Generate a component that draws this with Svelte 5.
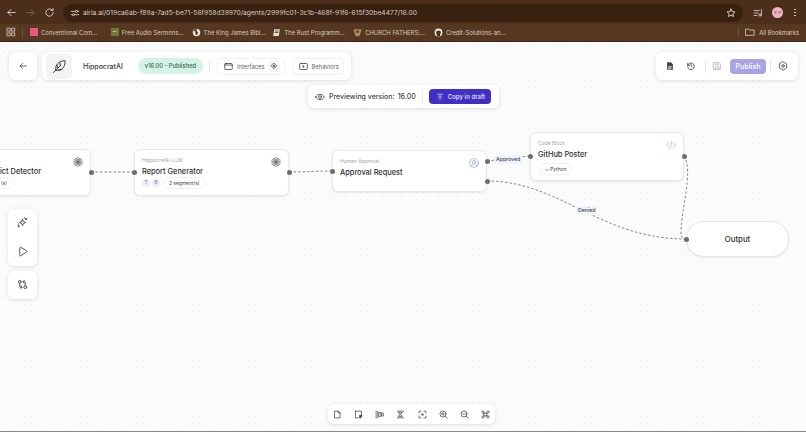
<script>
  const bookmarks = [
    { label: "Conventional Com...", kind: "pink" },
    { label: "Free Audio Sermons...", kind: "olive" },
    { label: "The King James Bibl...", kind: "globe" },
    { label: "The Rust Programm...", kind: "book" },
    { label: "CHURCH FATHERS:...", kind: "church" },
    { label: "Credit-Solutions-an...", kind: "github" }
  ];

  const nodes = [
    { id: "detector", cls: "cut", left: -27, top: 107, width: 118, height: 47, kicker: "", title: "Conflict Detector", icon: "llm", chip: "(s)" },
    { id: "report", left: 134, top: 107, width: 155, height: 47, kicker: "HippocratAI-LLM", title: "Report Generator", icon: "llm", tags: ["T", "B"], chip: "2 segment(s)" },
    { id: "approval", left: 332, top: 108, width: 155, height: 42, kicker: "Human Approval", title: "Approval Request", icon: "human" },
    { id: "github", cls: "tall", left: 530, top: 90, width: 154, height: 49, kicker: "Code Block", title: "GitHub Poster", icon: "code", chip: "‹› Python" }
  ];

  const ports = [
    [91, 130], [134, 130], [289, 130], [332, 129], [487, 119], [487, 139], [530, 114], [684, 114], [686, 197]
  ];

  const edges = [
    "M91 130 L134 130",
    "M289 130 C310 130 310 129 332 129",
    "M487 119 L530 114",
    "M487 139 C560 139 600 197 686 197",
    "M684 114 C694 130 680 170 681 194 L686 197"
  ];

  const petals = [0, 60, 120, 180, 240, 300];
</script>

<div class="window">
  <header class="chrome">
    <div class="toolbar">
      <div class="nav">
        <svg viewBox="0 0 12 12"><path d="M10 6H2M5.500 2.500 2 6l3.500 3.500" /></svg>
        <svg class="off" viewBox="0 0 12 12"><path d="M2 6h8M6.500 2.500 10 6l-3.500 3.500" /></svg>
        <svg viewBox="0 0 12 12"><path d="M10 6a4 4 0 1 1-1.200-2.800M10 1.500v2.200H7.800" /></svg>
      </div>
      <div class="url">
        <svg viewBox="0 0 12 12"><path d="M1.500 4h5M9 4h1.500M1.500 8H3M5.500 8h5" /><circle cx="7.800" cy="4" r="1.300" /><circle cx="4.200" cy="8" r="1.300" /></svg>
        <span class="address">airia.ai/019ca6ab-f89a-7ad5-be71-56f958d39970/agents/2999fc01-3c1b-468f-91f6-615f30be4477/16.00</span>
        <svg class="star" viewBox="0 0 12 12"><path d="m6 1.300 1.400 3 3.300.4-2.400 2.200.6 3.300L6 8.600l-2.900 1.600.6-3.300-2.400-2.200 3.300-.4z" /></svg>
      </div>
      <div class="chrome-end">
        <svg viewBox="0 0 12 12"><path d="M1.500 3h6M1.500 6h5M1.500 9h3M10 2v6.500" /><circle cx="8.500" cy="8.500" r="1.300" /></svg>
        <span class="avatar">K P</span>
        <span class="kebab"><i></i><i></i><i></i></span>
      </div>
    </div>
    <div class="bookmarks">
      <svg class="apps" viewBox="0 0 12 12"><rect x="1.500" y="1.500" width="3.500" height="3.500" /><rect x="7" y="1.500" width="3.500" height="3.500" /><rect x="1.500" y="7" width="3.500" height="3.500" /><rect x="7" y="7" width="3.500" height="3.500" /></svg>
      <span class="divider"></span>
      {#each bookmarks as mark}
        <span class="mark">
          {#if mark.kind === "pink"}
            <i class="fav pink"></i>
          {:else if mark.kind === "olive"}
            <i class="fav olive">–</i>
          {:else if mark.kind === "globe"}
            <svg class="fav-svg" viewBox="0 0 12 12"><circle cx="6" cy="6" r="5" fill="#e4e0dc" /><path d="M2 3.500 5 5 4.500 8 6.500 9.500 8 6 6 3.500 7 1.500 4 1.500z" fill="#4a2f1d" /></svg>
          {:else if mark.kind === "book"}
            <svg class="fav-svg" viewBox="0 0 12 12"><path d="M3 1.500h7.500L9 10.500H1.500z" fill="#e4e0dc" /><path d="M4.500 4h4M4 6h4" stroke="#4a2f1d" /></svg>
          {:else if mark.kind === "church"}
            <svg class="fav-svg" viewBox="0 0 12 12"><path d="M1 1.500h10v2L8.500 11h-5L1 3.500z" fill="#b08a58" /><circle cx="6" cy="4.500" r="2" fill="#6a4020" /></svg>
          {:else}
            <svg class="fav-svg" viewBox="0 0 12 12"><circle cx="6" cy="6" r="5.200" fill="#ece8e4" /><path d="M4 11V8.800L3 7.500V5l1-1.200h4L9 5v2.500L8 8.800V11z" fill="#4a2f1d" /></svg>
          {/if}
          {mark.label}
        </span>
      {/each}
      <span class="spacer"></span>
      <span class="divider"></span>
      <span class="all">
        <svg viewBox="0 0 12 12"><path d="M1 2.500h3.500l1 1.200H11V10H1z" /></svg>
        All Bookmarks
      </span>
    </div>
  </header>

  <main class="canvas">
    <svg class="wires" viewBox="0 0 806 390">
      {#each edges as d}
        <path {d} />
      {/each}
    </svg>

    {#each nodes as node (node.id)}
      <article class="node {node.cls ?? ''}" style="left:{node.left}px;top:{node.top}px;width:{node.width}px;height:{node.height}px">
        {#if node.kicker}<p class="kicker">{node.kicker}</p>{/if}
        <h3 class:low={!node.kicker}>{node.title}</h3>
        {#if node.chip}
          <div class="meta">
            {#each node.tags ?? [] as tag}<span class="tag">{tag}</span>{/each}
            <span class="chip">{node.chip}</span>
          </div>
        {/if}
        {#if node.icon === "llm"}
          <svg class="node-icon" viewBox="0 0 12 12">
            {#each petals as turn}
              <ellipse cx="6" cy="3.500" rx="2.500" ry="3" transform="rotate({turn} 6 6)" />
            {/each}
          </svg>
        {:else if node.icon === "human"}
          <svg class="node-icon human" viewBox="0 0 12 12">
            <circle cx="6" cy="6" r="5.200" />
            <circle cx="6" cy="4.600" r="1.800" />
            <path d="M3 9.800c.5-2 1.500-2.900 3-2.900s2.500.9 3 2.900" />
          </svg>
        {:else}
          <svg class="node-icon code" viewBox="0 0 12 12"><path d="M3.500 3 .8 6l2.700 3M8.500 3l2.700 3-2.700 3M7 1.800 5 10.200" /></svg>
        {/if}
      </article>
    {/each}

    <article class="output">Output</article>

    {#each ports as [x, y]}
      <span class="port" style="left:{x}px;top:{y}px"></span>
    {/each}
    <span class="edge-label approved">Approved</span>
    <span class="edge-label denied">Denied</span>

    <div class="topbar">
      <button class="card back" aria-label="Back">
        <svg viewBox="0 0 12 12"><path d="M10 6H2.500M5.500 3 2.500 6l3 3" /></svg>
      </button>
      <div class="card agent">
        <span class="agent-icon">
          <svg viewBox="0 0 16 16"><path d="M1.500 14.500 9.500 6.500M4 12C3 7 6.500 2 14 1.800 14.200 9 10 13.500 4 12zM5.500 6.500 5.800 9.800M8.500 4 8.800 7.200M7 11.500l3.500-.3" /></svg>
        </span>
        <span class="agent-name">HippocratAI</span>
        <span class="version">v16.00 - Published</span>
        <span class="divider light"></span>
        <span class="pill">
          <svg viewBox="0 0 12 12"><rect x="1" y="2" width="10" height="8" rx="1" /><path d="M1 4h10" /></svg>
          Interfaces
          <span class="diamond"><svg viewBox="0 0 12 12"><path d="M6 2 10 6 6 10 2 6z" /><path class="fill" d="M6 4.200 7.800 6 6 7.800 4.200 6z" /></svg></span>
        </span>
        <span class="pill">
          <svg viewBox="0 0 12 12"><rect x="1" y="2" width="10" height="8" rx="1" /><path class="fill" d="M5 4l2.500 2L5 8z" /></svg>
          Behaviors
        </span>
      </div>
      <span class="spacer"></span>
      <div class="card actions">
        <svg viewBox="0 0 12 12"><path class="fill" d="M2.500 1.500h4.500l2.500 2.500v6.500h-7z" /><path class="cut" d="M4 7h4M4 8.800h3" /></svg>
        <svg viewBox="0 0 12 12"><path d="M2 3v2.200h2.200M2.200 5A4 4 0 1 1 2 7M6 3.800V6l1.600 1" /></svg>
        <span class="divider light"></span>
        <svg class="dim" viewBox="0 0 12 12"><path d="M2 2h6.500L10 3.500V10H2zM4 2v2.500h3.500V2M4 10V7h4v3" /></svg>
        <span class="publish">Publish</span>
        <span class="divider light"></span>
        <svg viewBox="0 0 12 12"><path d="M6 1 10.300 3.500v5L6 11 1.700 8.500v-5z" /><circle cx="6" cy="6" r="1.600" /></svg>
      </div>
    </div>

    <div class="preview-row">
      <div class="card preview">
        <svg viewBox="0 0 12 12"><path d="M.8 6C2 3.800 3.800 2.700 6 2.700S10 3.800 11.200 6C10 8.200 8.200 9.300 6 9.300S2 8.200.8 6z" /><circle cx="6" cy="6" r="1.700" /></svg>
        <span class="preview-text">Previewing version:</span>
        <span class="preview-text">16.00</span>
        <span class="divider light"></span>
        <button class="copy">
          <svg viewBox="0 0 12 12"><path d="M2 1.800h8M6 10.500V4M3.300 6.500 6 3.800l2.700 2.700" /></svg>
          Copy in draft
        </button>
      </div>
    </div>

    <aside class="side">
      <div class="card side-group">
        <svg viewBox="0 0 12 12"><path d="M6 2.500 7 5l2.500 1L7 7 6 9.500 5 7 2.500 6 5 5z" /><circle class="fill" cx="10" cy="2.200" r="1.100" /><circle class="fill" cx="2" cy="10" r="1.100" /><circle class="fill" cx="8" cy="1" r=".7" /><circle class="fill" cx="1.300" cy="7.800" r=".7" /></svg>
        <svg viewBox="0 0 12 12"><path d="M3 2c0-.6.500-.9 1-.6l6.500 3.900c.5.300.5 1 0 1.300L4 10.600c-.5.300-1 0-1-.6z" /></svg>
      </div>
      <div class="card side-group">
        <svg viewBox="0 0 24 24" class="compare"><circle cx="18" cy="18" r="3" /><circle cx="6" cy="6" r="3" /><path d="M13 6h3a2 2 0 0 1 2 2v7M11 18H8a2 2 0 0 1-2-2V9M16 3l-3 3 3 3M8 21l3-3-3-3" /></svg>
      </div>
    </aside>

    <div class="dock-row">
      <div class="card dock">
        <svg viewBox="0 0 12 12"><path d="M2.500 1.500h4.500l2.500 2.500v6.500h-7zM7 1.500V4h2.500" /></svg>
        <svg viewBox="0 0 12 12"><path stroke-dasharray="1.500 1" d="M2 1.500h8v5M2 1.500v9h4" /><path class="fill" d="M7 6.500h4v2.500H9.500V11H7z" /></svg>
        <svg viewBox="0 0 12 12"><path d="M1.500 1.500v9M3.800 1.500v9" /><rect x="5.500" y="3.500" width="2.500" height="5" /><rect x="9" y="4" width="2" height="4" /></svg>
        <svg viewBox="0 0 12 12"><path d="M2 1.500h8M2 10.500h8" /><path d="M3.500 3.500h5L6 6zM3.500 8.500h5L6 6z" /></svg>
        <svg viewBox="0 0 12 12"><path d="M1.500 4V1.500H4M8 1.500h2.500V4M1.500 8v2.500H4M8 10.500h2.500V8" /><circle class="fill" cx="6" cy="6" r="1.500" /></svg>
        <svg viewBox="0 0 12 12"><circle cx="5.300" cy="5.300" r="4" /><path d="M8.300 8.300 11 11M3.500 5.300h3.600M5.300 3.500v3.600" /></svg>
        <svg viewBox="0 0 12 12"><circle cx="5.300" cy="5.300" r="4" /><path d="M8.300 8.300 11 11M3.500 5.300h3.600" /></svg>
        <svg viewBox="0 0 12 12"><path d="M4.200 4.200h3.600v3.600H4.200zM4.200 4.200H3a1.500 1.500 0 1 1 1.200-1.200zM7.800 4.200V3A1.500 1.500 0 1 1 9 4.200zM4.200 7.800V9A1.500 1.500 0 1 1 3 7.800zM7.800 7.800H9A1.500 1.500 0 1 1 7.800 9z" /></svg>
      </div>
    </div>
  </main>
</div>

<style>
  :global(body) {
    margin: 0;
    overflow: hidden;
    background: #fff;
  }

  .window {
    width: 806px;
    height: 432px;
    display: flex;
    flex-direction: column;
    overflow: hidden;
    font-family: Inter, "Liberation Sans", sans-serif;
    border-bottom: 1px solid #8a8a8a;
    box-sizing: border-box;
  }

  svg {
    fill: none;
    stroke: currentColor;
    stroke-width: 1;
    stroke-linecap: round;
    stroke-linejoin: round;
    flex: none;
  }

  svg .fill {
    fill: currentColor;
    stroke: none;
  }

  .chrome {
    height: 42px;
    flex: none;
    background: #563720;
    color: #dcd4cc;
    box-shadow: inset 0 -1px 0 #3b2415;
  }

  .toolbar {
    height: 24px;
    display: flex;
    align-items: center;
    padding-top: 1px;
    box-sizing: border-box;
    background: #4c2f1b;
  }

  .nav {
    display: flex;
    gap: 8px;
    padding-left: 5.500px;
    width: 63px;
    box-sizing: border-box;
  }

  .nav svg {
    width: 11px;
    height: 11px;
  }

  .nav .off {
    opacity: 0.3;
  }

  .url {
    width: 680px;
    height: 18px;
    border-radius: 9px;
    background: #39210f;
    display: flex;
    align-items: center;
    padding: 0 7px 0 7px;
    box-sizing: border-box;
    gap: 3px;
  }

  .url svg {
    width: 10px;
    height: 10px;
  }

  .address {
    font-size: 6.700px;
    white-space: nowrap;
    flex: 1;
    color: #d6cdc4;
  }

  .url .star {
    width: 10px;
    height: 10px;
    color: #efe9e3;
  }

  .chrome-end {
    flex: 1;
    display: flex;
    align-items: center;
    gap: 9px;
    padding-left: 10px;
  }

  .chrome-end svg {
    width: 10px;
    height: 10px;
  }

  .avatar {
    width: 11px;
    height: 11px;
    border-radius: 50%;
    background: #eeb6c4;
    color: #5a3a40;
    font-size: 4px;
    line-height: 11px;
    text-align: center;
  }

  .kebab {
    display: flex;
    flex-direction: column;
    gap: 1.500px;
    margin-left: 2px;
  }

  .kebab i {
    width: 1.500px;
    height: 1.500px;
    border-radius: 50%;
    background: #d8d0c8;
  }

  .bookmarks {
    height: 16px;
    display: flex;
    align-items: center;
    padding: 0 7px 0 6px;
    font-size: 5.900px;
    color: #d6cbc0;
    white-space: nowrap;
  }

  .apps {
    width: 10px;
    height: 10px;
  }

  .divider {
    width: 1px;
    height: 9px;
    background: #6f5443;
    margin: 0 7px 0 6px;
    flex: none;
  }

  .divider.light {
    height: 13px;
    background: #e8e8e8;
    margin: 0;
  }

  .mark {
    display: flex;
    align-items: center;
    gap: 3px;
    width: 80.800px;
    flex: none;
  }

  .fav {
    width: 8px;
    height: 8px;
    font-style: normal;
    font-size: 7px;
    line-height: 8px;
    text-align: center;
  }

  .pink {
    background: #f0557f;
  }

  .olive {
    background: #6f7a35;
    color: #e3e8c8;
  }

  .fav-svg {
    width: 9px;
    height: 9px;
    stroke: none;
  }

  .spacer {
    flex: 1;
  }

  .all {
    display: flex;
    align-items: center;
    gap: 4px;
    margin-left: -1px;
  }

  .all svg {
    width: 10px;
    height: 10px;
  }

  .canvas {
    position: relative;
    flex: 1;
    background-color: #fbfbfb;
    background-image: radial-gradient(#efefef 0.6px, transparent 0.7px);
    background-size: 7px 7px;
    color: #333;
  }

  .wires {
    position: absolute;
    inset: 0;
    width: 806px;
    height: 390px;
    color: #77777b;
  }

  .wires path {
    stroke-width: 0.900;
    stroke-dasharray: 2.500 2;
    stroke-linecap: butt;
  }

  .node {
    position: absolute;
    box-sizing: border-box;
    padding: 7px 7px 0;
    background: #fff;
    border: 1px solid #e8e8e8;
    border-radius: 6px;
    box-shadow: 0 1px 2px rgba(0, 0, 0, 0.08);
  }

  .kicker {
    margin: 0;
    font-size: 5px;
    line-height: 7px;
    color: #a6a6a6;
  }

  h3 {
    margin: 2px 0 0;
    font-size: 7.400px;
    line-height: 11px;
    font-weight: 500;
    color: #2f2f2f;
    white-space: nowrap;
  }

  h3.low {
    margin-top: 9px;
  }

  .meta {
    display: flex;
    align-items: center;
    gap: 2px;
  }

  .tall .meta {
    margin-top: 3px;
  }

  .cut .meta {
    padding-left: 13px;
  }

  .tag {
    width: 8px;
    height: 8px;
    border-radius: 50%;
    background: #eeeefb;
    color: #6a6ab0;
    font-size: 4.500px;
    line-height: 8px;
    text-align: center;
  }

  .chip {
    padding: 0 5px;
    height: 10px;
    border: 1px solid #f0f0f0;
    border-radius: 6px;
    font-size: 4.900px;
    line-height: 10px;
    color: #444;
    margin-left: 1px;
  }

  .node-icon {
    position: absolute;
    right: 7.500px;
    top: 7px;
    width: 10px;
    height: 10px;
    stroke-width: 0.600;
    color: #555;
  }

  .node-icon.human {
    color: #8b9be0;
    stroke-width: 0.800;
  }

  .node-icon.code {
    color: #e2a09c;
    stroke-width: 0.900;
  }

  .output {
    position: absolute;
    left: 686px;
    top: 179px;
    width: 103px;
    height: 36px;
    border: 1px solid #e6e6e6;
    border-radius: 18px;
    background: #fff;
    box-sizing: border-box;
    box-shadow: 0 1px 2px rgba(0, 0, 0, 0.08);
    font-size: 7.800px;
    font-weight: 500;
    line-height: 34px;
    text-align: center;
    color: #2f2f2f;
  }

  .port {
    position: absolute;
    width: 5px;
    height: 5px;
    margin: -2.500px 0 0 -2.500px;
    border-radius: 50%;
    background: #6e6e72;
  }

  .edge-label {
    position: absolute;
    padding: 1px 2px;
    background: #eff3fa;
    border-radius: 2px;
    font-size: 5.200px;
    line-height: 7px;
    color: #3c4654;
    font-weight: 500;
  }

  .approved {
    left: 494px;
    top: 113px;
  }

  .denied {
    left: 576px;
    top: 164px;
  }

  .card {
    background: #fff;
    border-radius: 6px;
    box-shadow: 0 1px 4px rgba(0, 0, 0, 0.12);
    box-sizing: border-box;
  }

  .topbar {
    position: relative;
    display: flex;
    gap: 5px;
    padding: 10px 8px 0 9px;
    height: 38px;
    box-sizing: border-box;
  }

  .back {
    width: 28px;
    height: 28px;
    border: 0;
    padding: 0;
    display: grid;
    place-items: center;
    color: #444;
  }

  .back svg {
    width: 10px;
    height: 10px;
  }

  .agent {
    width: 309px;
    height: 28px;
    display: flex;
    align-items: center;
    padding-left: 4px;
    font-size: 5.800px;
    color: #666;
  }

  .agent-icon {
    width: 26px;
    height: 25px;
    border-radius: 5px;
    background: #f3f3f3;
    display: grid;
    place-items: center;
    color: #333;
    margin-right: 11px;
  }

  .agent-icon svg {
    width: 15px;
    height: 15px;
  }

  .agent-name {
    width: 55px;
    flex: none;
    font-size: 7px;
    font-weight: 500;
    color: #3a3a3a;
  }

  .version {
    width: 65px;
    height: 16px;
    flex: none;
    border-radius: 8px;
    background: #d3f3e4;
    color: #3a5f50;
    font-size: 5.800px;
    font-weight: 500;
    line-height: 16px;
    text-align: center;
    margin-right: 6px;
  }

  .pill {
    height: 15px;
    display: flex;
    align-items: center;
    gap: 4px;
    padding: 0 4px 0 6px;
    border: 1px solid #f2f2f2;
    border-radius: 4px;
    margin-left: 7px;
    white-space: nowrap;
  }

  .pill svg {
    width: 9px;
    height: 9px;
    color: #333;
  }

  .diamond {
    width: 11px;
    height: 11px;
    background: #f3f3f3;
    border-radius: 2px;
    display: grid;
    place-items: center;
  }

  .diamond svg {
    width: 8px;
    height: 8px;
  }

  .actions {
    width: 142px;
    height: 28px;
    display: flex;
    align-items: center;
    padding-left: 9px;
    color: #444;
  }

  .actions svg {
    width: 10px;
    height: 10px;
  }

  .actions svg:nth-of-type(2) {
    margin-left: 11px;
  }

  .actions .divider {
    margin-left: 9px;
  }

  .actions .cut {
    stroke: #fff;
  }

  .actions .dim {
    color: #b5b5b5;
    margin-left: 6px;
  }

  .publish {
    width: 36px;
    height: 15px;
    flex: none;
    margin: 0 0 0 8px;
    border-radius: 4px;
    background: #a8a2e6;
    color: #fff;
    font-size: 7.200px;
    font-weight: 500;
    line-height: 15px;
    text-align: center;
  }

  .publish + .divider {
    margin-left: 4px;
  }

  .actions svg:last-child {
    margin-left: 7px;
  }

  .preview-row {
    position: relative;
    display: flex;
    justify-content: center;
    padding: 5px 0 0 1px;
  }

  .preview {
    width: 191px;
    height: 23px;
    display: flex;
    align-items: center;
    gap: 3px;
    padding: 0 0 0 7px;
  }

  .preview > svg {
    width: 10px;
    height: 10px;
    color: #444;
    margin-right: 1px;
  }

  .preview-text {
    font-size: 7px;
    font-weight: 450;
    color: #444;
    white-space: nowrap;
  }

  .preview .divider {
    margin: 0 3px;
  }

  .copy {
    flex: none;
    width: 62px;
    height: 15px;
    display: flex;
    align-items: center;
    gap: 4px;
    padding: 0 0 0 7px;
    border: 0;
    border-radius: 4px;
    background: #3f2fc4;
    color: #e8e6fb;
    font: 500 6.100px Inter, "Liberation Sans", sans-serif;
    white-space: nowrap;
  }

  .copy svg {
    width: 8px;
    height: 8px;
  }

  .side {
    position: absolute;
    left: 8px;
    top: 167px;
    display: flex;
    flex-direction: column;
    gap: 5px;
  }

  .side-group {
    width: 29px;
    display: flex;
    flex-direction: column;
    align-items: center;
    gap: 18px;
    padding: 8px 0 9px;
    color: #444;
  }

  .side-group svg {
    width: 11px;
    height: 11px;
  }

  .side-group .compare {
    stroke-width: 2;
  }

  .dock-row {
    position: absolute;
    left: 0;
    right: 0;
    bottom: 7px;
    display: flex;
    justify-content: center;
    padding-left: 17px;
  }

  .dock {
    width: 167px;
    height: 20px;
    display: flex;
    align-items: center;
    justify-content: space-between;
    padding: 0 4.500px;
    color: #444;
  }

  .dock svg {
    width: 9px;
    height: 9px;
  }
</style>
